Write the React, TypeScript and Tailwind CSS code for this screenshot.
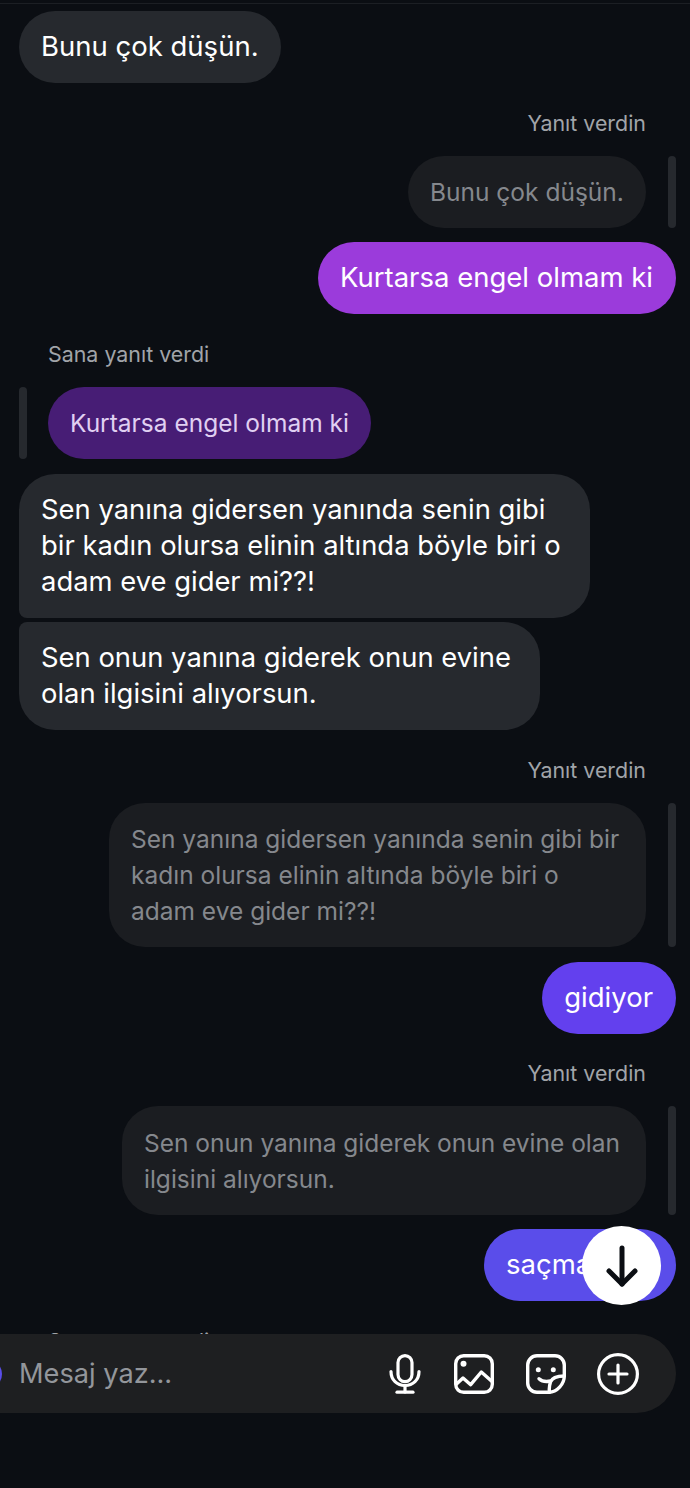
function ReplyLabel({ text }: { text: string }) {
  return <div className="pr-[44px] text-right text-[21.4px] leading-[28px] text-[#a1a4a9]">{text}</div>;
}

function QuotedReply({ lines, mt, width }: { lines: string[]; mt: string; width: string }) {
  return (
    <div className={`flex justify-end gap-[22px] pr-[14px] ${mt}`}>
      <div className={`rounded-[36px] bg-[#1b1d21] px-[22px] py-[18px] text-[24.5px] leading-[36px] text-[#85888d] ${width}`}>
        {lines.map((line) => (
          <div key={line} className="whitespace-nowrap">
            {line}
          </div>
        ))}
      </div>
      <div className="w-[8px] shrink-0 rounded-full bg-[#26292e]" />
    </div>
  );
}

function MicIcon() {
  return (
    <svg width="32" height="40" viewBox="0 0 32 40" fill="none" stroke="white" strokeWidth="3.2" strokeLinecap="round" strokeLinejoin="round">
      <rect x="9" y="1.6" width="14" height="26" rx="7" />
      <path d="M2 17.5c0 8.5 6 14 14 14s14-5.500 14-14" />
      <path d="M16 31.500v6.500" />
      <path d="M8 38.200h16" />
    </svg>
  );
}

function ImageIcon() {
  return (
    <svg width="40" height="40" viewBox="0 0 40 40" fill="none" stroke="white" strokeWidth="3.4" strokeLinecap="round" strokeLinejoin="round">
      <rect x="1.700" y="1.700" width="36.600" height="36.600" rx="8" />
      <circle cx="9.500" cy="9.700" r="3" fill="white" stroke="none" />
      <path d="M2.500 30L9 24l7.700 6.700L27.300 18 38 27.500" />
    </svg>
  );
}

function StickerIcon() {
  return (
    <svg width="40" height="40" viewBox="0 0 40 40" fill="none" stroke="white" strokeWidth="3.4" strokeLinecap="round" strokeLinejoin="round">
      <path d="M23 38.300H11a9.400 9.400 0 0 1-9.300-9.400V11A9.400 9.400 0 0 1 11 1.700h18a9.400 9.400 0 0 1 9.300 9.300V22C38.300 30 31 38.300 23 38.300z" />
      <path d="M38.300 22C32 22 26 24 24.500 28 23.500 31 23 35 23.500 38.300" />
      <path d="M13 24.700C16 27.500 20 28 24.500 27" />
      <circle cx="12.300" cy="15.700" r="2.500" fill="white" stroke="none" />
      <circle cx="27.300" cy="15.700" r="2.500" fill="white" stroke="none" />
    </svg>
  );
}

function PlusIcon() {
  return (
    <svg width="42" height="42" viewBox="0 0 42 42" fill="none" stroke="white" strokeWidth="3.200" strokeLinecap="round">
      <circle cx="21" cy="21" r="19.400" />
      <path d="M21 12v18M12 21h18" />
    </svg>
  );
}

export default function App() {
  return (
    <div className="relative h-[1488px] w-[690px] overflow-hidden bg-[#0b0e13] font-['Inter',sans-serif]">
      <div className="h-[1334px] overflow-hidden">
        <div className="mt-[3px] h-px bg-[#1c1f24]" />

        <div className="ml-[19px] mt-[7px] w-fit rounded-[36px] bg-[#26292e] px-[22px] pb-[19px] pt-[17px] text-[27.5px] leading-[36px] text-white">
          Bunu çok düşün.
        </div>

        <div className="mt-[26px]">
          <ReplyLabel text="Yanıt verdin" />
        </div>
        <QuotedReply lines={["Bunu çok düşün."]} mt="mt-[19px]" width="w-[238px]" />

        <div className="mr-[14px] mt-[14px] flex justify-end">
          <div className="rounded-[36px] bg-[#9b3bdb] pb-[19px] pl-[22px] pr-[23px] pt-[17px] text-[27.5px] leading-[36px] text-white">
            Kurtarsa engel olmam ki
          </div>
        </div>

        <div className="ml-[48px] mt-[26px] text-[21.4px] leading-[28px] text-[#a1a4a9]">Sana yanıt verdi</div>

        <div className="ml-[19px] mt-[19px] flex gap-[21px]">
          <div className="w-[8px] rounded-full bg-[#26292e]" />
          <div className="rounded-[36px] bg-[#471d75] px-[22px] py-[18px] text-[24.5px] leading-[36px] text-[#e0d0f2]">
            Kurtarsa engel olmam ki
          </div>
        </div>

        <div className="ml-[19px] mt-[15px] w-[571px] rounded-[36px] rounded-bl-[8px] bg-[#26292e] px-[22px] pb-[19px] pt-[17px] text-[27.4px] leading-[36px] text-white">
          <div>Sen yanına gidersen yanında senin gibi</div>
          <div>bir kadın olursa elinin altında böyle biri o</div>
          <div>adam eve gider mi??!</div>
        </div>
        <div className="ml-[19px] mt-[4px] w-[521px] rounded-[36px] rounded-tl-[8px] bg-[#26292e] px-[22px] pb-[19px] pt-[17px] text-[27.4px] leading-[36px] text-white">
          <div>Sen onun yanına giderek onun evine</div>
          <div>olan ilgisini alıyorsun.</div>
        </div>

        <div className="mt-[26px]">
          <ReplyLabel text="Yanıt verdin" />
        </div>
        <QuotedReply
          lines={["Sen yanına gidersen yanında senin gibi bir", "kadın olursa elinin altında böyle biri o", "adam eve gider mi??!"]}
          mt="mt-[19px]"
          width="w-[537px]"
        />

        <div className="mr-[14px] mt-[15px] flex justify-end">
          <div className="rounded-[36px] bg-[#6340ee] pb-[19px] pl-[22px] pr-[23px] pt-[17px] text-[27.5px] leading-[36px] text-white">gidiyor</div>
        </div>

        <div className="mt-[25px]">
          <ReplyLabel text="Yanıt verdin" />
        </div>
        <QuotedReply lines={["Sen onun yanına giderek onun evine olan", "ilgisini alıyorsun."]} mt="mt-[19px]" width="w-[524px] pt-[19px]" />

        <div className="mr-[14px] mt-[14px] flex justify-end">
          <div className="w-[192px] rounded-[36px] bg-[#5a4dea] px-[22px] pb-[19px] pt-[17px] text-[27.5px] leading-[36px] text-white">saçma</div>
        </div>

        <div className="ml-[48px] mt-[26px] text-[21.4px] leading-[28px] text-[#a1a4a9]">Sana yanıt verdi</div>
      </div>

      {/* jump to latest */}
      <button className="absolute left-[582px] top-[1226px] flex h-[79px] w-[79px] items-center justify-center rounded-full bg-white">
        <svg width="32" height="42" viewBox="0 0 32 42" fill="none" stroke="#0b0e13" strokeWidth="5" strokeLinecap="round" strokeLinejoin="round">
          <path d="M16 3v36" />
          <path d="M3 26l13 13 13-13" />
        </svg>
      </button>

      <div className="mr-[14px] flex h-[79px] items-center rounded-r-[40px] bg-[#1e1f21]">
        <div className="-ml-[28px] h-[30px] w-[30px] shrink-0 rounded-full bg-[#5a4dea]" />
        <div className="ml-[17px] flex-1 text-[27.2px] leading-[36px] text-[#93969b]">Mesaj yaz...</div>
        <div className="mr-[37px] flex items-center">
          <MicIcon />
          <div className="ml-[33px]">
            <ImageIcon />
          </div>
          <div className="ml-[32px]">
            <StickerIcon />
          </div>
          <div className="ml-[31px]">
            <PlusIcon />
          </div>
        </div>
      </div>
    </div>
  );
}
